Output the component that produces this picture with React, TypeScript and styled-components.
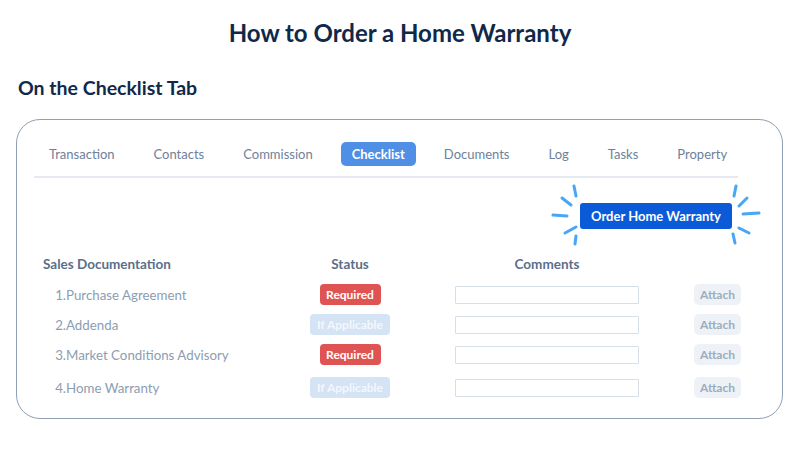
import React from "react";
import styled, { createGlobalStyle } from "styled-components";

const Global = createGlobalStyle`
  html, body { margin: 0; padding: 0; background: #ffffff; }
  body { font-family: "Lato", "Open Sans", "Liberation Sans", sans-serif; }
  * { box-sizing: border-box; }
`;

const Page = styled.div`
  width: 800px;
  height: 450px;
  padding: 19px 0 0 0;
  display: flex;
  flex-direction: column;
`;

const Title = styled.h1`
  margin: 0;
  text-align: center;
  font-size: 24px;
  line-height: 28px;
  font-weight: 700;
  color: #10294a;
`;

const Subtitle = styled.h2`
  margin: 29px 0 0 18px;
  font-size: 19.5px;
  line-height: 24px;
  font-weight: 700;
  color: #10294a;
`;

const Card = styled.section`
  margin: 19px 0 0 16px;
  width: 767px;
  border: 1.5px solid #8fa0b4;
  border-radius: 24px;
  padding: 22px 44px 20px 17px;
  display: flex;
  flex-direction: column;
`;

const TabBar = styled.nav`
  display: flex;
  gap: 17px;
  padding: 0 0 10px 4px;
  border-bottom: 2px solid #e6eaf0;
`;

const Tab = styled.div<{ $active?: boolean }>`
  padding: 0 11px;
  height: 24px;
  display: flex;
  align-items: center;
  border-radius: 5px;
  font-size: 13px;
  font-weight: ${(p) => (p.$active ? 700 : 400)};
  color: ${(p) => (p.$active ? "#ffffff" : "#6d819b")};
  background: ${(p) => (p.$active ? "#4f8fe6" : "transparent")};
`;

const ButtonRow = styled.div`
  display: flex;
  justify-content: flex-end;
  padding-right: 6px;
  margin-top: 25px;
`;

const ButtonWrap = styled.div`
  position: relative;
`;

const OrderButton = styled.button`
  width: 152px;
  height: 26px;
  border: none;
  border-radius: 3px;
  background: #0b5bd8;
  color: #ffffff;
  font-family: inherit;
  font-size: 13px;
  font-weight: 700;
  cursor: pointer;
`;

const Rays = styled.svg`
  position: absolute;
  left: -30px;
  top: -20px;
  pointer-events: none;
`;

const Table = styled.div`
  margin-top: 27px;
  padding-left: 9px;
  display: grid;
  grid-template-columns: 202px 100px 184px 47px;
  column-gap: 55px;
  row-gap: 9px;
  align-items: center;
`;

const HeadCell = styled.div<{ $center?: boolean }>`
  font-size: 13.5px;
  font-weight: 700;
  color: #5a6f8b;
  text-align: ${(p) => (p.$center ? "center" : "left")};
  margin-bottom: 3px;
  white-space: nowrap;
`;

const ItemCell = styled.div<{ $extra?: boolean }>`
  display: flex;
  padding-left: 11px;
  font-size: 13.3px;
  color: #8c9db2;
  white-space: nowrap;
  margin-top: ${(p) => (p.$extra ? "3px" : "0")};
`;

const Num = styled.span`
  width: 12px;
  text-align: right;
`;

const Cell = styled.div<{ $extra?: boolean }>`
  display: flex;
  justify-content: center;
  margin-top: ${(p) => (p.$extra ? "3px" : "0")};
`;

const Badge = styled.span<{ $required?: boolean }>`
  height: 21px;
  width: ${(p) => (p.$required ? "61px" : "80px")};
  border-radius: 4px;
  display: inline-flex;
  align-items: center;
  justify-content: center;
  font-size: 12px;
  font-weight: 700;
  color: ${(p) => (p.$required ? "#ffffff" : "#f3f7fc")};
  background: ${(p) => (p.$required ? "#e05353" : "#d4e4f4")};
`;

const CommentBox = styled.div`
  width: 184px;
  height: 18px;
  border: 1.5px solid #d6dee7;
  border-radius: 1px;
  background: #ffffff;
`;

const Attach = styled.span`
  width: 47px;
  height: 21px;
  border-radius: 5px;
  display: inline-flex;
  align-items: center;
  justify-content: center;
  background: #eef2f7;
  color: #9badc0;
  font-size: 12px;
  font-weight: 700;
`;

const tabs = ["Transaction", "Contacts", "Commission", "Checklist", "Documents", "Log", "Tasks", "Property"];

const rows = [
  { n: "1.", name: "Purchase Agreement", required: true },
  { n: "2.", name: "Addenda", required: false },
  { n: "3.", name: "Market Conditions Advisory", required: true },
  { n: "4.", name: "Home Warranty", required: false },
];

// rays in coords relative to svg origin (button left-30, top-20)
const rayLines: [number, number, number, number][] = [
  // left side (button at x=30..182, y=20..46)
  [24, 3, 26, 13],
  [12, 15, 21, 22],
  [3, 32, 17, 33],
  [15, 50, 26, 44],
  [26, 53, 25, 61],
  // right side
  [186, 3, 184, 13],
  [197, 15, 189, 23],
  [193, 31, 209, 30],
  [189, 45, 199, 50],
  [183, 51, 185, 60],
];

export default function App() {
  return (
    <Page>
      <Global />
      <Title>How to Order a Home Warranty</Title>
      <Subtitle>On the Checklist Tab</Subtitle>
      <Card>
        <TabBar>
          {tabs.map((t) => (
            <Tab key={t} $active={t === "Checklist"}>
              {t}
            </Tab>
          ))}
        </TabBar>
        <ButtonRow>
          <ButtonWrap>
            <OrderButton>Order Home Warranty</OrderButton>
            <Rays width="212" height="66" viewBox="0 0 212 66">
              {rayLines.map(([x1, y1, x2, y2], i) => (
                <line
                  key={i}
                  x1={x1}
                  y1={y1}
                  x2={x2}
                  y2={y2}
                  stroke="#48a6f4"
                  strokeWidth="3"
                  strokeLinecap="round"
                />
              ))}
            </Rays>
          </ButtonWrap>
        </ButtonRow>
        <Table>
          <HeadCell>Sales Documentation</HeadCell>
          <HeadCell $center>Status</HeadCell>
          <HeadCell $center>Comments</HeadCell>
          <HeadCell />
          {rows.map((r, i) => {
            const extra = i === 3;
            return (
              <React.Fragment key={r.n}>
                <ItemCell $extra={extra}>
                  <Num>{r.n}</Num>
                  {r.name}
                </ItemCell>
                <Cell $extra={extra}>
                  <Badge $required={r.required}>{r.required ? "Required" : "If Applicable"}</Badge>
                </Cell>
                <Cell $extra={extra}>
                  <CommentBox />
                </Cell>
                <Cell $extra={extra}>
                  <Attach>Attach</Attach>
                </Cell>
              </React.Fragment>
            );
          })}
        </Table>
      </Card>
    </Page>
  );
}
